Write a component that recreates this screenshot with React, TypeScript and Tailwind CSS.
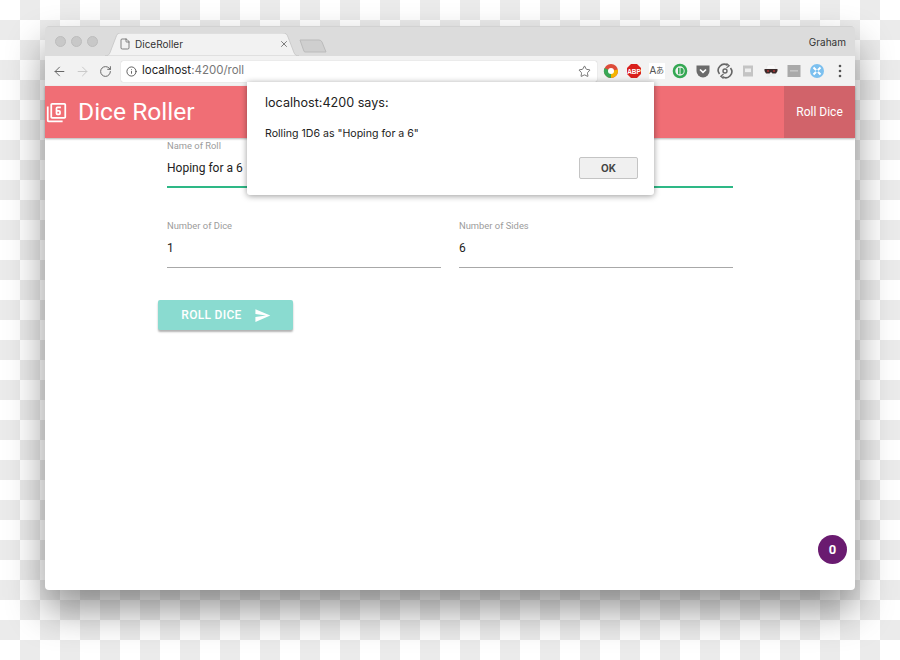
import React from 'react';
import { Star, X, ArrowLeft, ArrowRight, RotateCw, Info, File } from 'lucide-react';
import { MdFilter6, MdSend } from 'react-icons/md';

const chromeFont = "font-['Inter','Liberation_Sans',sans-serif]";

// extension icons in the chrome toolbar
const Extensions = () => (
  <div className="flex items-center gap-[6.9px] ml-[6px]">
    <svg width="16" height="16" viewBox="0 0 16 16">
      <circle cx="8" cy="8" r="7" fill="#dd4b39" />
      <path d="M8 8 L14.8 6.5 A7 7 0 0 1 8 15 Z" fill="#f4b400" />
      <path d="M8 8 L8 15 A7 7 0 0 1 1.5 5 Z" fill="#3aa757" />
      <circle cx="8" cy="8" r="3" fill="#fff" />
    </svg>
    <svg width="16" height="16" viewBox="0 0 16 16">
      <polygon points="5,1 11,1 15,5 15,11 11,15 5,15 1,11 1,5" fill="#d9201c" />
      <text x="8" y="10.5" textAnchor="middle" fontSize="6.5" fontWeight="700" fill="#fff" fontFamily="Liberation Sans">ABP</text>
    </svg>
    <div className="w-[16px] h-[16px] flex items-center justify-center bg-white text-[10px] leading-none text-[#555] font-['Liberation_Sans','Noto_Sans_CJK_JP',sans-serif]">A<span className="text-[8px]">あ</span></div>
    <svg width="16" height="16" viewBox="0 0 16 16">
      <circle cx="8" cy="8" r="6" fill="none" stroke="#34a853" strokeWidth="2.6" />
      <rect x="6" y="4.8" width="1.6" height="6.4" fill="#34a853" />
      <path d="M8.5 4.8 A3.2 3.2 0 0 1 8.5 11.2 Z" fill="#34a853" />
    </svg>
    <svg width="16" height="16" viewBox="0 0 16 16">
      <path d="M1.5 2.5 H14.5 V8 A6.5 6.5 0 0 1 1.5 8 Z" fill="#6b6b6b" />
      <path d="M5 6.5 L8 9.3 L11 6.5" fill="none" stroke="#fff" strokeWidth="1.7" />
    </svg>
    <svg width="16" height="16" viewBox="0 0 16 16" fill="none" stroke="#666" strokeWidth="1.6">
      <path d="M2.5 11 A6 6 0 0 1 10.5 2.3" />
      <path d="M13.5 5 A6 6 0 0 1 5.5 13.7" />
      <path d="M9.5 0.5 L12.2 2.7 L9.5 4.9" strokeWidth="1.2" />
      <path d="M6.5 11 L3.8 13.3 L6.5 15.5" strokeWidth="1.2" />
      <circle cx="8" cy="8" r="2" strokeWidth="1.4" />
    </svg>
    <svg width="16" height="16" viewBox="0 0 16 16">
      <rect x="3" y="2.5" width="10" height="11" fill="#c4c4c4" />
      <rect x="5" y="5.5" width="6" height="3.6" fill="#eee" />
    </svg>
    <svg width="16" height="16" viewBox="0 0 16 16">
      <path d="M4.5 2 H11.5 L13 6 H3 Z" fill="#fafafa" stroke="#ddd" strokeWidth="0.4" />
      <path d="M1.5 6 H14.5 V8 L13 10.5 H9.5 L8 9 L6.5 10.5 H3 L1.5 8 Z" fill="#3b2a2a" />
      <circle cx="5" cy="8" r="1.1" fill="#a33" />
      <circle cx="11" cy="8" r="1.1" fill="#a33" />
      <path d="M4 11 H12 L12.5 14 H3.5 Z" fill="#ececec" />
    </svg>
    <svg width="16" height="16" viewBox="0 0 16 16">
      <rect x="1.5" y="2" width="13" height="12" fill="#a9a9a9" />
      <rect x="4" y="7" width="8" height="1.6" fill="#c4c4c4" />
    </svg>
    <svg width="16" height="16" viewBox="0 0 16 16">
      <circle cx="8" cy="8" r="7" fill="#7cc0ef" />
      <path d="M4.5 4.5 L11.5 11.5 M11.5 4.5 L4.5 11.5" stroke="#fff" strokeWidth="2" />
      <circle cx="8" cy="8" r="1.5" fill="#7cc0ef" />
    </svg>
    <svg width="16" height="16" viewBox="0 0 16 16" fill="#555">
      <circle cx="8" cy="3" r="1.3" />
      <circle cx="8" cy="8" r="1.3" />
      <circle cx="8" cy="13" r="1.3" />
    </svg>
  </div>
);

const Field = ({ label, value, active, className }: { label: string; value: string; active?: boolean; className?: string }) => (
  <div className={className}>
    <div className="text-[9.4px] leading-[12px] text-[#9b9b9b]">{label}</div>
    <div className="mt-[6px] text-[12px] leading-[20px] text-[#222]">{value}</div>
    <div className={active ? 'mt-[8px] h-[2px] bg-[#2eb886]' : 'mt-[9px] h-px bg-[#a8a8a8]'} />
  </div>
);

export default function App() {
  return (
    <div className="relative w-[900px] h-[660px] overflow-hidden pt-[26px] pl-[45px] bg-[conic-gradient(#ebebeb_25%,#ffffff_0_50%,#ebebeb_0_75%,#ffffff_0)] bg-[size:40px_40px]">
      <div className="relative w-[810px] h-[564px] rounded-[4px] flex flex-col bg-white shadow-[0_20px_38px_rgba(0,0,0,0.42)]">
        {/* title bar */}
        <div className={`h-[30px] flex items-end rounded-t-[4px] bg-[#dcdcdc] border-t border-[#d2d2d2] ${chromeFont}`}>
          <div className="flex gap-[5px] pl-[10px] self-start mt-[9px]">
            <span className="w-[11px] h-[11px] rounded-full bg-[#c8c8c8] border border-[#bdbdbd]" />
            <span className="w-[11px] h-[11px] rounded-full bg-[#c8c8c8] border border-[#bdbdbd]" />
            <span className="w-[11px] h-[11px] rounded-full bg-[#c8c8c8] border border-[#bdbdbd]" />
          </div>
          <div className="relative w-[194px] h-[23px] ml-[7px] flex items-center pl-[14px] pb-[2px]">
            <svg className="absolute inset-0" width="194" height="23" viewBox="0 0 194 23">
              <path d="M0 23 C4 23 5 20 6 17 L11 4 C12 1 13 0 17 0 H177 C181 0 182 1 183 4 L188 17 C189 20 190 23 194 23 Z" fill="#f2f2f2" stroke="#c4c4c4" strokeWidth="0.8" />
            </svg>
            <File size={12} strokeWidth={1.4} className="relative text-[#555]" />
            <span className="relative ml-[4px] text-[10px] leading-none text-[#333]">DiceRoller</span>
            <X size={10} strokeWidth={2} className="relative ml-[96px] text-[#666]" />
          </div>
          <svg className="mb-[3px]" width="28" height="14" viewBox="0 0 28 14">
            <path d="M1 1 H20 Q22 1 23 3 L27 13 H6 Q5 13 4.5 11 Z" fill="#cfcfcf" stroke="#bbb" />
          </svg>
          <span className="self-start mt-[9px] ml-auto pr-[9px] text-[10px] leading-[12px] text-[#333]">Graham</span>
        </div>

        {/* toolbar */}
        <div className={`h-[30px] flex items-center bg-[#f2f2f2] ${chromeFont}`}>
          <ArrowLeft size={15} strokeWidth={1.6} className="ml-[7px] text-[#666]" />
          <ArrowRight size={15} strokeWidth={1.6} className="ml-[8px] text-[#c9c9c9]" />
          <RotateCw size={13} strokeWidth={1.8} className="ml-[9px] text-[#666]" />
          <div className="ml-[9px] w-[476px] h-[21px] flex items-center rounded-[2px] bg-white pl-[5px] pr-[5px] shadow-[0_0_1px_rgba(0,0,0,0.3)]">
            <Info size={11} strokeWidth={1.8} className="text-[#444]" />
            <span className="ml-[5px] text-[11.5px] leading-none text-[#222]">localhost<span className="text-[#777]">:4200/roll</span></span>
            <Star size={13} strokeWidth={1.5} className="ml-auto mr-[1px] text-[#555]" />
          </div>
          <Extensions />
        </div>

        {/* app header */}
        <header className="relative h-[52px] flex items-center bg-[#f06e75] shadow-[0_1px_2px_rgba(0,0,0,0.3)] font-['Roboto',sans-serif] text-white">
          <MdFilter6 size={21} className="ml-px" />
          <span className="ml-[11px] text-[24.6px] leading-none">Dice Roller</span>
          <div className="ml-auto w-[71px] h-full flex items-center justify-center bg-[#d1636a] text-[12px]">Roll Dice</div>
        </header>

        {/* form */}
        <main className="flex-1 pl-[122px] pr-[122px] pt-[2px] font-['Roboto',sans-serif]">
          <Field label="Name of Roll" value="Hoping for a 6" active />
          <div className="mt-[32px] flex gap-[18px]">
            <Field className="flex-1" label="Number of Dice" value="1" />
            <Field className="flex-1" label="Number of Sides" value="6" />
          </div>
          <button className="mt-[32px] -ml-[9px] w-[135px] h-[30px] flex items-center justify-center gap-[12px] pl-px rounded-[2px] bg-[#8adbd0] text-white text-[12px] font-medium tracking-[0.3px] shadow-[0_2px_2px_rgba(0,0,0,0.3)]">
            ROLL DICE
            <MdSend size={17} />
          </button>
        </main>

        {/* score badge */}
        <div className="absolute left-[773px] top-[509px] w-[29px] h-[29px] rounded-full flex items-center justify-center bg-[#6a1b70] text-white text-[13px] font-bold font-['Roboto',sans-serif]">0</div>

        {/* js alert */}
        <div className={`absolute left-[202px] top-[56px] w-[407px] h-[113px] rounded-b-[3px] bg-white shadow-[0_1px_6px_rgba(0,0,0,0.4)] pl-[18px] pr-[16px] pt-[13px] ${chromeFont}`}>
          <div className="text-[12.6px] leading-[16px] text-[#222]">localhost:4200 says:</div>
          <div className="mt-[16px] text-[10.6px] leading-[14px] text-[#222]">Rolling 1D6 as "Hoping for a 6"</div>
          <div className="mt-[16px] flex justify-end">
            <button className="w-[59px] h-[22px] rounded-[2px] border border-[#c4c4c4] bg-[#f0f0f0] text-[10px] font-bold text-[#444]">OK</button>
          </div>
        </div>
      </div>
    </div>
  );
}
